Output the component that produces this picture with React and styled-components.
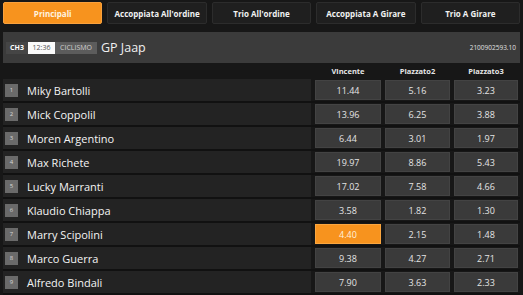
import React from "react";
import styled, { createGlobalStyle } from "styled-components";

const Global = createGlobalStyle`
  html, body { margin: 0; padding: 0; background: #171717; }
  body { font-family: "Open Sans", "Noto Sans", sans-serif; color: #eee; overflow: hidden; }
  * { box-sizing: border-box; }
`;

const Page = styled.div`
  width: 523px;
  height: 295px;
  background: #171717;
  display: flex;
  flex-direction: column;
`;

const Tabs = styled.div`
  display: flex;
  gap: 5px;
  padding: 2px 3px 0 3px;
`;

const Tab = styled.div`
  flex: 1;
  height: 22px;
  display: flex;
  align-items: center;
  justify-content: center;
  border-radius: 2px;
  font-size: 8px;
  font-weight: 700;
  color: ${(p) => (p.$active ? "#fff3e0" : "#f2f2f2")};
  background: ${(p) => (p.$active ? "#f7931e" : "#1f1f1f")};
  border: 1px solid ${(p) => (p.$active ? "#f9a13d" : "#2c2c2c")};
`;

const EventBar = styled.div`
  margin: 8px 3px 0 3px;
  height: 31px;
  background: #3b3b3b;
  display: flex;
  align-items: center;
  padding: 0 4px 0 3px;
`;

const Badges = styled.div`
  display: flex;
  height: 12px;
`;

const Badge = styled.span`
  display: flex;
  align-items: center;
  justify-content: center;
  width: ${(p) => p.$w}px;
  font-size: 7px;
  font-weight: ${(p) => (p.$bold ? 700 : 400)};
  background: ${(p) => p.$bg};
  color: ${(p) => p.$fg};
`;

const EventName = styled.span`
  margin-left: 4px;
  font-size: 12.5px;
  color: #f0f0f0;
`;

const EventId = styled.span`
  margin-left: auto;
  font-size: 6.5px;
  color: #e0e0e0;
`;

const Grid = styled.div`
  display: grid;
  grid-template-columns: 1fr 66px 65px 64px;
  column-gap: 4px;
  margin: 0 3px;
  padding-right: 2px;
`;

const HeadRow = styled(Grid)`
  height: 16px;
  align-items: center;
`;

const HeadLabel = styled.span`
  font-size: 7.5px;
  font-weight: 700;
  color: #e6e6e6;
  text-align: center;
`;

const Row = styled(Grid)`
  height: 24px;
  border-bottom: 2px solid #111;
  align-items: center;
`;

const NameCell = styled.div`
  height: 22px;
  background: #232323;
  display: flex;
  align-items: center;
  padding-left: 2px;
`;

const Num = styled.span`
  width: 13px;
  height: 13px;
  background: #6a6a6a;
  color: #d8d8d8;
  font-size: 6px;
  display: flex;
  align-items: center;
  justify-content: center;
`;

const Name = styled.span`
  margin-left: 9px;
  font-size: 11px;
  color: #f4f4f4;
`;

const Odd = styled.div`
  height: 20px;
  display: flex;
  align-items: center;
  justify-content: center;
  font-size: 9px;
  color: ${(p) => (p.$hot ? "#fff1dc" : "#e4e4e4")};
  background: ${(p) => (p.$hot ? "#f7931e" : "#3a3a3a")};
  border: 1px solid ${(p) => (p.$hot ? "#fba63f" : "#434343")};
`;

const tabs = ["Principali", "Accoppiata All'ordine", "Trio All'ordine", "Accoppiata A Girare", "Trio A Girare"];

const runners = [
  ["Miky Bartolli", "11.44", "5.16", "3.23"],
  ["Mick Coppolil", "13.96", "6.25", "3.88"],
  ["Moren Argentino", "6.44", "3.01", "1.97"],
  ["Max Richete", "19.97", "8.86", "5.43"],
  ["Lucky Marranti", "17.02", "7.58", "4.66"],
  ["Klaudio Chiappa", "3.58", "1.82", "1.30"],
  ["Marry Scipolini", "4.40", "2.15", "1.48"],
  ["Marco Guerra", "9.38", "4.27", "2.71"],
  ["Alfredo Bindali", "7.90", "3.63", "2.33"],
];

export default function App() {
  return (
    <Page>
      <Global />
      <Tabs>
        {tabs.map((t, i) => (
          <Tab key={t} $active={i === 0}>{t}</Tab>
        ))}
      </Tabs>
      <EventBar>
        <Badges>
          <Badge $w={22} $bg="#454545" $fg="#fff" $bold>CH3</Badge>
          <Badge $w={27} $bg="#fafafa" $fg="#555">12:36</Badge>
          <Badge $w={42} $bg="#5c5c5c" $fg="#cfcfcf">CICLISMO</Badge>
        </Badges>
        <EventName>GP Jaap</EventName>
        <EventId>2100902593.10</EventId>
      </EventBar>
      <HeadRow>
        <span />
        <HeadLabel>Vincente</HeadLabel>
        <HeadLabel>Piazzato2</HeadLabel>
        <HeadLabel>Piazzato3</HeadLabel>
      </HeadRow>
      {runners.map(([name, a, b, c], i) => (
        <Row key={name}>
          <NameCell>
            <Num>{i + 1}</Num>
            <Name>{name}</Name>
          </NameCell>
          <Odd $hot={i === 6}>{a}</Odd>
          <Odd>{b}</Odd>
          <Odd>{c}</Odd>
        </Row>
      ))}
    </Page>
  );
}
